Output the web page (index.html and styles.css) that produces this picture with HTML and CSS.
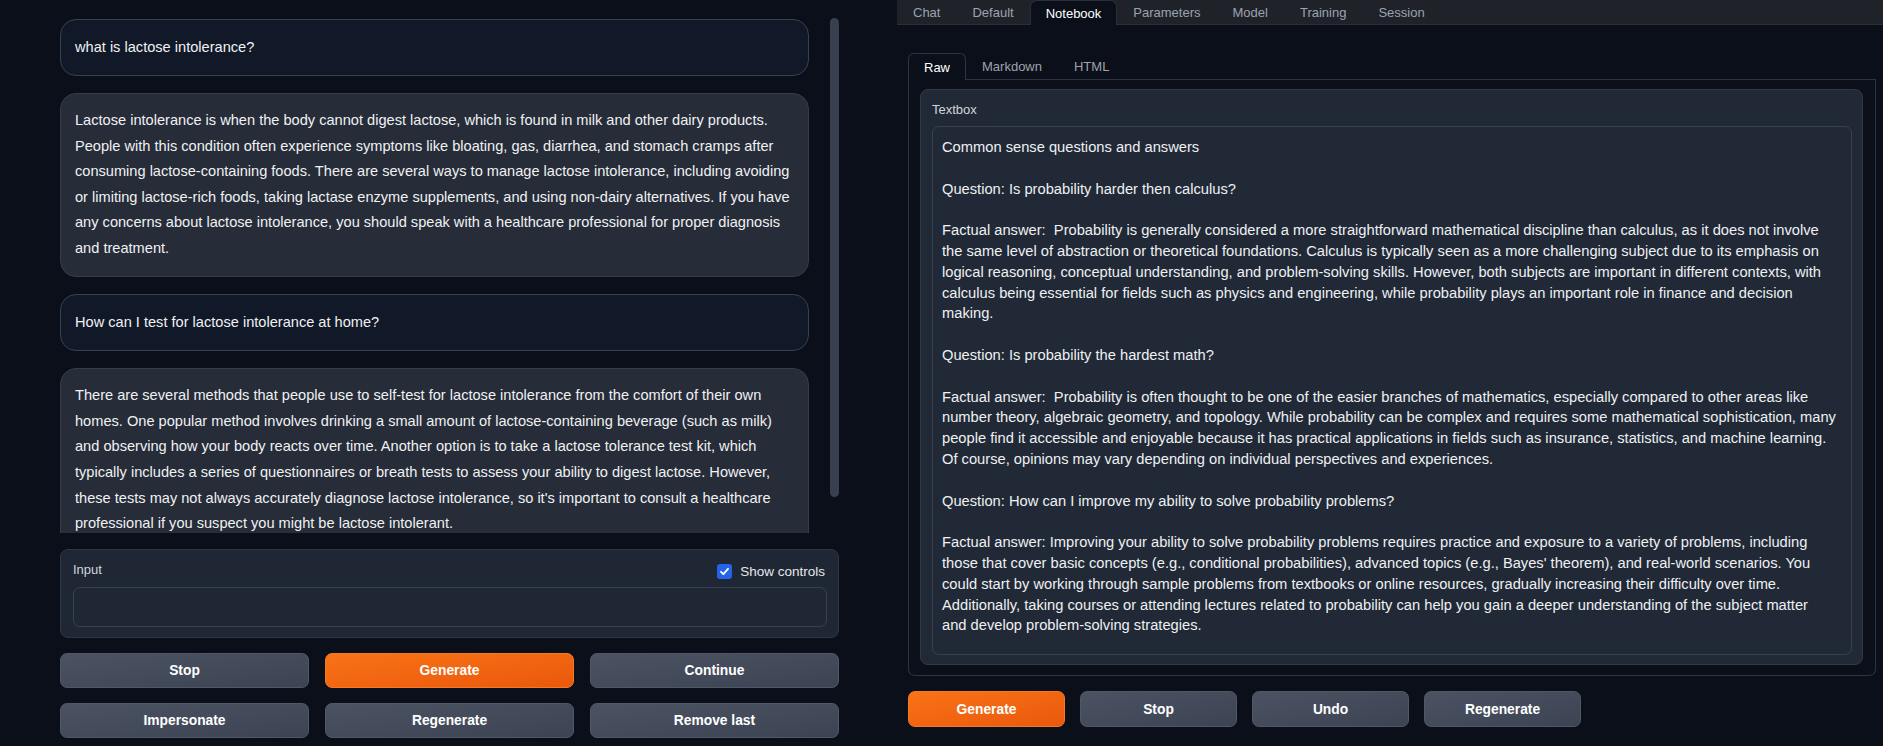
FILE: index.html
```html
<!DOCTYPE html>
<html>
<head>
<meta charset="utf-8">
<link rel="stylesheet" href="styles.css">
</head>
<body>
<div class="app">
  <div class="left">
    <div class="chat">
      <div class="messages">
        <div class="bubble user">what is lactose intolerance?</div>
        <div class="bubble bot">Lactose intolerance is when the body cannot digest lactose, which is found in milk and other dairy products. People with this condition often experience symptoms like bloating, gas, diarrhea, and stomach cramps after consuming lactose-containing foods. There are several ways to manage lactose intolerance, including avoiding or limiting lactose-rich foods, taking lactase enzyme supplements, and using non-dairy alternatives. If you have any concerns about lactose intolerance, you should speak with a healthcare professional for proper diagnosis and treatment.</div>
        <div class="bubble user">How can I test for lactose intolerance at home?</div>
        <div class="bubble bot">There are several methods that people use to self-test for lactose intolerance from the comfort of their own homes. One popular method involves drinking a small amount of lactose-containing beverage (such as milk) and observing how your body reacts over time. Another option is to take a lactose tolerance test kit, which typically includes a series of questionnaires or breath tests to assess your ability to digest lactose. However, these tests may not always accurately diagnose lactose intolerance, so it's important to consult a healthcare professional if you suspect you might be lactose intolerant.</div>
      </div>
      <div class="thumb"></div>
    </div>
    <div class="input-block">
      <div class="input-head">
        <span class="label">Input</span>
        <span class="check">
          <svg class="cbox" width="15" height="15" viewBox="0 0 15 15"><rect x="0" y="0" width="15" height="15" rx="3" fill="#2563eb"/><path d="M4 7.8 L6.4 10.2 L11 4.8" fill="none" stroke="#fff" stroke-width="1.8" stroke-linecap="round" stroke-linejoin="round"/></svg>
          <span>Show controls</span>
        </span>
      </div>
      <div class="input-field"></div>
    </div>
    <div class="btns">
      <div class="btn sec">Stop</div>
      <div class="btn pri">Generate</div>
      <div class="btn sec">Continue</div>
      <div class="btn sec">Impersonate</div>
      <div class="btn sec">Regenerate</div>
      <div class="btn sec">Remove last</div>
    </div>
  </div>
  <div class="right">
    <div class="tabbar">
      <div class="tab">Chat</div>
      <div class="tab">Default</div>
      <div class="tab active">Notebook</div>
      <div class="tab">Parameters</div>
      <div class="tab">Model</div>
      <div class="tab">Training</div>
      <div class="tab">Session</div>
    </div>
    <div class="notebook">
      <div class="subtabs">
        <div class="subtab active">Raw</div>
        <div class="subtab">Markdown</div>
        <div class="subtab">HTML</div>
        <div class="subfill"></div>
      </div>
      <div class="panel">
        <div class="block">
          <div class="label">Textbox</div>
          <div class="textarea">Common sense questions and answers

Question: Is probability harder then calculus?

Factual answer:  Probability is generally considered a more straightforward mathematical discipline than calculus, as it does not involve
the same level of abstraction or theoretical foundations. Calculus is typically seen as a more challenging subject due to its emphasis on
logical reasoning, conceptual understanding, and problem-solving skills. However, both subjects are important in different contexts, with
calculus being essential for fields such as physics and engineering, while probability plays an important role in finance and decision
making.

Question: Is probability the hardest math?

Factual answer:  Probability is often thought to be one of the easier branches of mathematics, especially compared to other areas like
number theory, algebraic geometry, and topology. While probability can be complex and requires some mathematical sophistication, many
people find it accessible and enjoyable because it has practical applications in fields such as insurance, statistics, and machine learning.
Of course, opinions may vary depending on individual perspectives and experiences.

Question: How can I improve my ability to solve probability problems?

Factual answer: Improving your ability to solve probability problems requires practice and exposure to a variety of problems, including
those that cover basic concepts (e.g., conditional probabilities), advanced topics (e.g., Bayes' theorem), and real-world scenarios. You
could start by working through sample problems from textbooks or online resources, gradually increasing their difficulty over time.
Additionally, taking courses or attending lectures related to probability can help you gain a deeper understanding of the subject matter
and develop problem-solving strategies.</div>
        </div>
      </div>
      <div class="actions">
        <div class="btn pri">Generate</div>
        <div class="btn sec">Stop</div>
        <div class="btn sec">Undo</div>
        <div class="btn sec">Regenerate</div>
      </div>
    </div>
  </div>
</div>
</body>
</html>
```

FILE: styles.css
```css
html, body {
  margin: 0;
  padding: 0;
  background: #0b0f19;
  height: 746px;
  overflow: hidden;
  font-family: "Liberation Sans", Arial, Helvetica, sans-serif;
  color: #e5e7eb;
}
.app {
  display: flex;
  gap: 58px;
  padding-left: 60px;
}
.left {
  width: 779px;
  flex: none;
  display: flex;
  flex-direction: column;
  padding-top: 18px;
}
.chat {
  display: flex;
  gap: 21px;
  height: 515px;
  overflow: hidden;
}
.messages {
  width: 749px;
  flex: none;
  display: flex;
  flex-direction: column;
  gap: 17px;
  padding-top: 1px;
  overflow: hidden;
}
.bubble {
  flex: none;
  border: 1px solid #374151;
  border-radius: 16px;
  padding: 14.5px 14px 14.5px 14px;
  font-size: 14.6px;
  line-height: 25.6px;
  color: #f0f1f3;
}
.bubble.user {
  background: #111827;
}
.bubble.bot {
  background: #262c38;
  border-color: #353c4a;
}
.thumb {
  width: 9px;
  height: 479px;
  background: #384050;
  border-radius: 5px;
  flex: none;
}
.input-block {
  margin-top: 16px;
  height: 89px;
  box-sizing: border-box;
  background: #1f2735;
  border: 1px solid #2f3746;
  border-radius: 8px;
  padding: 10px 11px 10px 12px;
}
.input-head {
  display: flex;
  justify-content: space-between;
  align-items: center;
  height: 18px;
  margin-bottom: 9px;
}
.label {
  font-size: 13px;
  color: #d1d5db;
}
.check {
  display: flex;
  align-items: center;
  gap: 8px;
  font-size: 13.5px;
  color: #e5e7eb;
  margin-top: 4px;
  margin-right: 2px;
}
.cbox {
  display: block;
}
.input-field {
  height: 40px;
  box-sizing: border-box;
  border: 1px solid #374151;
  border-radius: 7px;
  background: #1f2735;
}
.btns {
  margin-top: 15px;
  display: grid;
  grid-template-columns: repeat(3, 1fr);
  gap: 15px 16px;
}
.btn {
  height: 35px;
  box-sizing: border-box;
  border-radius: 7px;
  display: flex;
  align-items: center;
  justify-content: center;
  font-weight: bold;
  font-size: 13.8px;
  color: #ffffff;
}
.btn.sec {
  background: linear-gradient(to bottom right, #4b5363, #3c4453);
  border: 1px solid #505868;
}
.btn.pri {
  background: linear-gradient(to bottom right, #f97316, #ea580c);
  border: 1px solid #f47a26;
}
.right {
  flex: 1;
  min-width: 0;
}
.tabbar {
  height: 25px;
  background: #1f2229;
  border-bottom: 1px solid #2a2e37;
  box-sizing: border-box;
  display: flex;
  padding-left: 0;
}
.tab {
  padding: 0 16px;
  font-size: 13px;
  color: #9ca3af;
  display: flex;
  align-items: center;
  height: 24px;
}
.tab.active {
  background: #0b0f19;
  color: #ffffff;
  border: 1px solid #2a2e37;
  border-bottom: none;
  border-radius: 7px 7px 0 0;
  padding: 0 15px;
  height: 25px;
  box-sizing: border-box;
}
.notebook {
  padding: 28px 7px 0 11px;
}
.subtabs {
  display: flex;
  height: 27px;
}
.subtab {
  padding: 0 16px;
  font-size: 13px;
  color: #9ca3af;
  display: flex;
  align-items: center;
  border-bottom: 1px solid #2d3340;
  box-sizing: border-box;
}
.subtab.active {
  color: #ffffff;
  border: 1px solid #2d3340;
  border-bottom: none;
  border-radius: 6px 6px 0 0;
  padding: 0 15px;
}
.subfill {
  flex: 1;
  border-bottom: 1px solid #2d3340;
}
.panel {
  height: 596px;
  box-sizing: border-box;
  border: 1px solid #2d3340;
  border-top: none;
  border-radius: 0 0 7px 7px;
  padding: 9px 12px 10px 11px;
}
.block {
  height: 100%;
  box-sizing: border-box;
  background: #212936;
  border: 1px solid #323a49;
  border-radius: 8px;
  padding: 11px 10px 9px 11px;
  display: flex;
  flex-direction: column;
}
.block .label {
  height: 17px;
  line-height: 17px;
  margin-bottom: 8px;
}
.textarea {
  flex: 1;
  border: 1px solid #374151;
  border-radius: 7px;
  background: #212936;
  padding: 10px 4px 10px 9px;
  font-size: 14.7px;
  line-height: 20.8px;
  white-space: pre;
  color: #eef0f3;
  overflow: hidden;
}
.actions {
  margin-top: 15px;
  display: flex;
  gap: 15px;
}
.actions .btn {
  width: 157px;
  height: 36px;
}
```
